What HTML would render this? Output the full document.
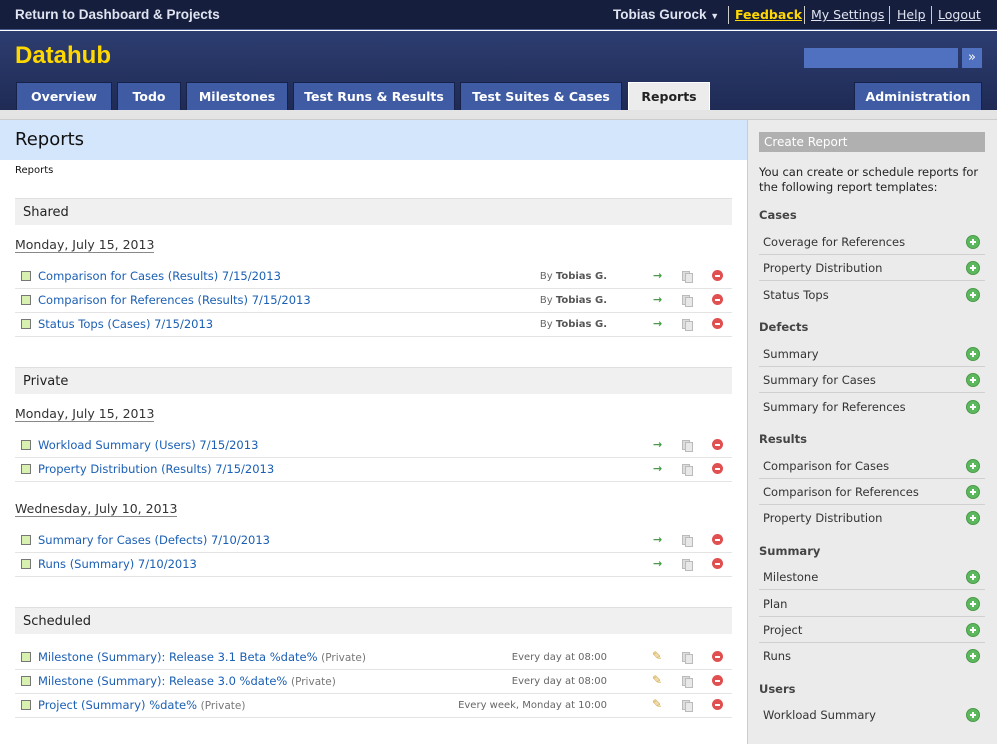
<!DOCTYPE html>
<html><head><meta charset="utf-8"><style>
*{margin:0;padding:0;box-sizing:border-box}
body{width:997px;height:744px;overflow:hidden;font-family:"DejaVu Sans",Verdana,sans-serif;font-size:11px;background:#fff;position:relative;color:#222}
.a{position:absolute;white-space:nowrap}
#top{left:0;top:0;width:997px;height:30px;background:#161e3e;border-bottom:1px solid #4a5a8a}
#hdr{left:0;top:31px;width:997px;height:79px;background:linear-gradient(#2d3d70,#1f2b55)}
.tab{position:absolute;top:82px;height:28px;background:#3f5ba3;border:1px solid #16224a;border-bottom:none;color:#fff;font-weight:bold;font-size:12.5px;text-align:center;line-height:27px}
.sec{position:absolute;left:15px;width:717px;height:27px;background:#f0f0f0;border-top:1px solid #e0e0e0;font-size:13px;line-height:27px;padding-left:8px;color:#222}
.date{position:absolute;left:15px;font-size:12.5px;color:#333;border-bottom:1px solid #888;line-height:15px}
.row{position:absolute;left:15px;width:717px;height:24px;border-bottom:1px solid #e4e4e4}
.row .sq{position:absolute;left:6px;top:6px;width:10px;height:10px;background:#d8f0b0;border:1px solid #777}
.row .t{position:absolute;left:23px;top:4px;color:#1a5fb4;font-size:11.5px}
.row .t span{color:#777;font-size:10.5px}
.row .by{position:absolute;right:125px;top:6px;color:#666;font-size:10px}
.row .by b{color:#555}
.ar{position:absolute;left:638px;top:4px;color:#4a9a4a;font-size:11px;font-weight:bold}
.cp{position:absolute;left:667px;top:6px;width:8px;height:10px;background:#ddd;border:1px solid #bbb}
.cp:after{content:"";position:absolute;left:2px;top:1px;width:6px;height:8px;background:#e8e8e8;border:1px solid #bbb}
.dl{position:absolute;left:697px;top:5px;width:11px;height:11px;border-radius:50%;background:#e05050}
.dl:after{content:"";position:absolute;left:3px;top:5px;width:5px;height:2px;background:#fff}
.pen{position:absolute;left:637px;top:3px;color:#d0a030;font-size:12px}
#side{left:747px;top:120px;width:250px;height:624px;background:#ebebeb;border-left:1px solid #ccc}
.sh{position:absolute;left:759px;font-weight:bold;color:#444;font-size:11.5px}
.si{position:absolute;left:759px;width:226px;height:26px;border-bottom:1px solid #d0d0d0;font-size:11.5px;color:#333;padding-left:4px;line-height:26px}
.si.last{border-bottom:none}
.pl{position:absolute;right:5px;top:6px;width:14px;height:14px;border-radius:50%;background:#5cb85c;border:1px solid #4a9a4a}
.pl:before{content:"";position:absolute;left:3px;top:5px;width:6px;height:2px;background:#fff}
.pl:after{content:"";position:absolute;left:5px;top:3px;width:2px;height:6px;background:#fff}
</style></head><body>
<div class="a" id="top"></div>
<div class="a" style="left:15px;top:7px;color:#e0e4f0;font-weight:bold;font-size:12.5px;font-family:'Liberation Sans',sans-serif;font-size:13.5px">Return to Dashboard &amp; Projects</div>
<div class="a" style="left:613px;top:7px;color:#e0e4f0;font-weight:bold;font-size:13.5px;font-family:'Liberation Sans',sans-serif">Tobias Gurock <span style="font-size:9px">▼</span></div>
<div class="a" style="left:728px;top:6px;height:18px;border-left:1px solid #ccc"></div>
<div class="a" style="left:735px;top:7px;color:#ffd800;font-weight:bold;font-size:12.5px;text-decoration:underline">Feedback</div>
<div class="a" style="left:804px;top:6px;height:18px;border-left:1px solid #ccc"></div>
<div class="a" style="left:811px;top:7px;color:#e0e4f0;font-size:12.5px;text-decoration:underline">My Settings</div>
<div class="a" style="left:889px;top:6px;height:18px;border-left:1px solid #ccc"></div>
<div class="a" style="left:897px;top:7px;color:#e0e4f0;font-size:12.5px;text-decoration:underline">Help</div>
<div class="a" style="left:931px;top:6px;height:18px;border-left:1px solid #ccc"></div>
<div class="a" style="left:938px;top:7px;color:#e0e4f0;font-size:12.5px;text-decoration:underline">Logout</div>
<div class="a" id="hdr"></div>
<div class="a" style="left:15px;top:42px;color:#ffd800;font-weight:bold;font-size:24px;font-family:'Liberation Sans',sans-serif">Datahub</div>
<div class="a" style="left:804px;top:48px;width:154px;height:20px;background:#5070c0"></div>
<div class="a" style="left:962px;top:48px;width:20px;height:20px;background:#5070c0;color:#fff;text-align:center;line-height:19px;font-size:13px">»</div>
<div class="tab" style="left:16px;width:96px">Overview</div>
<div class="tab" style="left:117px;width:64px">Todo</div>
<div class="tab" style="left:186px;width:102px">Milestones</div>
<div class="tab" style="left:293px;width:162px">Test Runs &amp; Results</div>
<div class="tab" style="left:460px;width:162px">Test Suites &amp; Cases</div>
<div class="tab" style="left:628px;width:82px;background:#ececec;color:#222;border-color:#fff">Reports</div>
<div class="tab" style="left:854px;width:128px">Administration</div>
<div class="a" style="left:0;top:110px;width:997px;height:10px;background:#e4e4e4;border-bottom:1px solid #ccc"></div>
<div class="a" style="left:0;top:120px;width:747px;height:40px;background:#d4e6fb"></div>
<div class="a" style="left:15px;top:129px;font-size:18px;color:#111;font-family:'DejaVu Sans',sans-serif">Reports</div>
<div class="a" style="left:15px;top:165px;font-size:10px;color:#111">Reports</div>

<div class="sec" style="top:198px">Shared</div>
<div class="date" style="top:237px">Monday, July 15, 2013</div>
<div class="row" style="top:265px"><i class="sq"></i><div class="t">Comparison for Cases (Results) 7/15/2013</div><div class="by">By <b>Tobias G.</b></div><div class="ar">→</div><i class="cp"></i><i class="dl"></i></div>
<div class="row" style="top:289px"><i class="sq"></i><div class="t">Comparison for References (Results) 7/15/2013</div><div class="by">By <b>Tobias G.</b></div><div class="ar">→</div><i class="cp"></i><i class="dl"></i></div>
<div class="row" style="top:313px"><i class="sq"></i><div class="t">Status Tops (Cases) 7/15/2013</div><div class="by">By <b>Tobias G.</b></div><div class="ar">→</div><i class="cp"></i><i class="dl"></i></div>

<div class="sec" style="top:367px">Private</div>
<div class="date" style="top:406px">Monday, July 15, 2013</div>
<div class="row" style="top:434px"><i class="sq"></i><div class="t">Workload Summary (Users) 7/15/2013</div><div class="ar">→</div><i class="cp"></i><i class="dl"></i></div>
<div class="row" style="top:458px"><i class="sq"></i><div class="t">Property Distribution (Results) 7/15/2013</div><div class="ar">→</div><i class="cp"></i><i class="dl"></i></div>
<div class="date" style="top:501px">Wednesday, July 10, 2013</div>
<div class="row" style="top:529px"><i class="sq"></i><div class="t">Summary for Cases (Defects) 7/10/2013</div><div class="ar">→</div><i class="cp"></i><i class="dl"></i></div>
<div class="row" style="top:553px"><i class="sq"></i><div class="t">Runs (Summary) 7/10/2013</div><div class="ar">→</div><i class="cp"></i><i class="dl"></i></div>

<div class="sec" style="top:607px">Scheduled</div>
<div class="row" style="top:646px"><i class="sq"></i><div class="t">Milestone (Summary): Release 3.1 Beta %date% <span>(Private)</span></div><div class="by">Every day at 08:00</div><div class="pen">✎</div><i class="cp"></i><i class="dl"></i></div>
<div class="row" style="top:670px"><i class="sq"></i><div class="t">Milestone (Summary): Release 3.0 %date% <span>(Private)</span></div><div class="by">Every day at 08:00</div><div class="pen">✎</div><i class="cp"></i><i class="dl"></i></div>
<div class="row" style="top:694px"><i class="sq"></i><div class="t">Project (Summary) %date% <span>(Private)</span></div><div class="by">Every week, Monday at 10:00</div><div class="pen">✎</div><i class="cp"></i><i class="dl"></i></div>

<div class="a" id="side"></div>
<div class="a" style="left:759px;top:132px;width:226px;height:20px;background:#b0b0b0;color:#fff;font-size:12px;line-height:20px;padding-left:5px">Create Report</div>
<div class="a" style="left:759px;top:165px;font-size:11.5px;color:#222;line-height:15px">You can create or schedule reports for<br>the following report templates:</div>
<div class="sh" style="top:208px">Cases</div>
<div class="si" style="top:229px">Coverage for References<i class="pl"></i></div>
<div class="si" style="top:255px">Property Distribution<i class="pl"></i></div>
<div class="si last" style="top:282px">Status Tops<i class="pl"></i></div>
<div class="sh" style="top:320px">Defects</div>
<div class="si" style="top:341px">Summary<i class="pl"></i></div>
<div class="si" style="top:367px">Summary for Cases<i class="pl"></i></div>
<div class="si last" style="top:394px">Summary for References<i class="pl"></i></div>
<div class="sh" style="top:432px">Results</div>
<div class="si" style="top:453px">Comparison for Cases<i class="pl"></i></div>
<div class="si" style="top:479px">Comparison for References<i class="pl"></i></div>
<div class="si last" style="top:505px">Property Distribution<i class="pl"></i></div>
<div class="sh" style="top:544px">Summary</div>
<div class="si" style="top:564px">Milestone<i class="pl"></i></div>
<div class="si" style="top:591px">Plan<i class="pl"></i></div>
<div class="si" style="top:617px">Project<i class="pl"></i></div>
<div class="si last" style="top:643px">Runs<i class="pl"></i></div>
<div class="sh" style="top:682px">Users</div>
<div class="si last" style="top:702px">Workload Summary<i class="pl"></i></div>
</body></html>
